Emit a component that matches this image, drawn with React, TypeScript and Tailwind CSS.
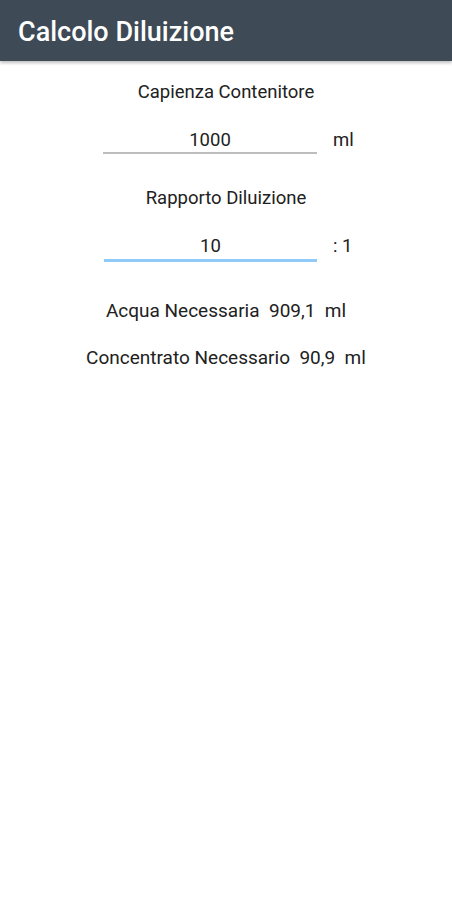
const App = () => {
  return (
    <div className="min-h-screen bg-white" style={{ fontFamily: "Roboto, sans-serif" }}>
      <div className="h-[61px] bg-[#3e4a55] flex items-center px-[18px] pt-[4px] shadow-[0_2px_3px_rgba(0,0,0,0.25)]">
        <h1 className="text-white text-[27px] font-medium">Calcolo Diluizione</h1>
      </div>

      <div className="flex flex-col items-center text-[#212121]">
        <p className="mt-[19px] text-[18.5px] leading-[24px]">Capienza Contenitore</p>
        <div className="mt-[24px] flex items-end pl-[103px] w-full text-[18.5px] leading-[24px]">
          <div className="w-[214px] border-b-2 border-[#bdbdbd] text-center">1000</div>
          <span className="ml-[16px] border-b-2 border-transparent">ml</span>
        </div>

        <p className="mt-[32px] text-[18.5px] leading-[24px]">Rapporto Diluizione</p>
        <div className="mt-[24px] flex items-end pl-[104px] w-full text-[18.5px] leading-[24px]">
          <div className="w-[213px] border-b-[3px] border-[#90caf9] text-center pb-[1px]">10</div>
          <span className="ml-[16px] border-b-[3px] border-transparent pb-[1px]">: 1</span>
        </div>

        <p className="mt-[37px] text-[19px] leading-[24px] whitespace-pre">Acqua Necessaria  909,1  ml</p>
        <p className="mt-[23px] text-[19px] leading-[24px] whitespace-pre">Concentrato Necessario  90,9  ml</p>
      </div>
    </div>
  );
};

export default App;
